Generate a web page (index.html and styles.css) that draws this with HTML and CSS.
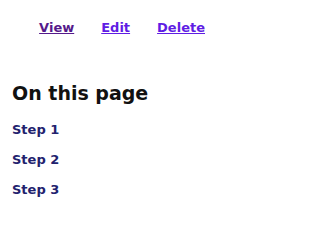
FILE: index.html
```html
<!DOCTYPE html>
<html>
<head>
<meta charset="utf-8">
<link rel="stylesheet" href="styles.css">
</head>
<body>
<main class="page">
  <nav class="actions">
    <a class="action visited" href="#view">View</a>
    <a class="action" href="#edit">Edit</a>
    <a class="action" href="#delete">Delete</a>
  </nav>
  <section class="toc">
    <h2 class="toc-title">On this page</h2>
    <ul class="toc-list">
      <li><a class="toc-link" href="#step1">Step 1</a></li>
      <li><a class="toc-link" href="#step2">Step 2</a></li>
      <li><a class="toc-link" href="#step3">Step 3</a></li>
    </ul>
  </section>
</main>
</body>
</html>
```
FILE: styles.css
```css
html, body {
  margin: 0;
  padding: 0;
  background: #fff;
}
.page {
  width: 220px;
  box-sizing: border-box;
  padding: 0 15px 0 12px;
  font-family: "DejaVu Sans", "Noto Sans", sans-serif;
}
.actions {
  display: flex;
  justify-content: flex-end;
  gap: 27px;
  padding-top: 19px;
}
.action {
  font-size: 13px;
  font-weight: 700;
  color: #5f1de4;
  text-decoration: underline;
  line-height: 18px;
}
.action.visited {
  color: #551a8b;
}
.toc-title {
  margin: 44px 0 0;
  font-size: 19px;
  font-weight: 700;
  color: #111;
  line-height: 24px;
}
.toc-list {
  list-style: none;
  margin: 16px 0 0;
  padding: 0;
  display: flex;
  flex-direction: column;
  gap: 12px;
}
.toc-link {
  display: block;
  font-size: 13px;
  font-weight: 700;
  color: #22226e;
  text-decoration: none;
  line-height: 18px;
}
```
